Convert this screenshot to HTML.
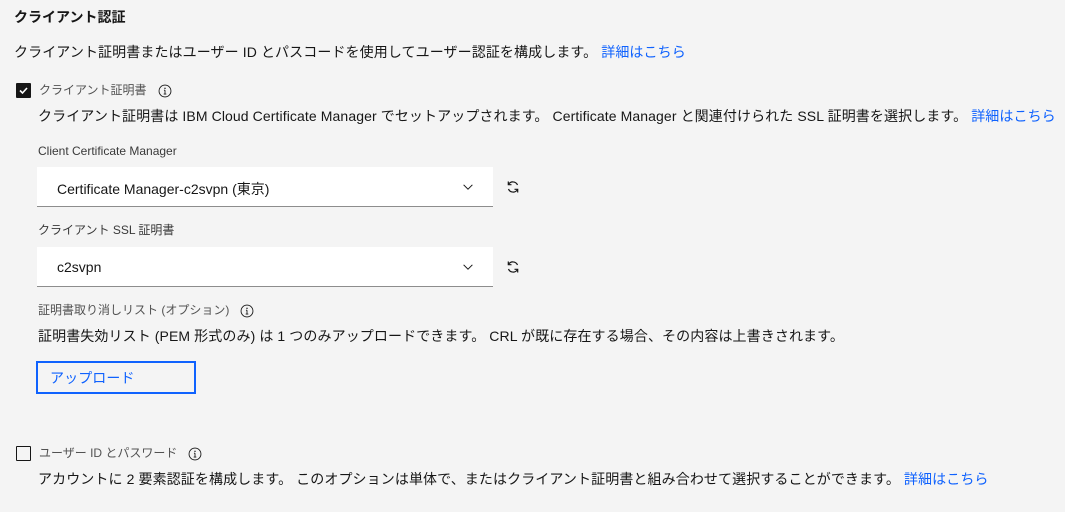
<!DOCTYPE html>
<html><head><meta charset="utf-8"><style>
body{margin:0;width:1065px;height:512px;background:#f4f4f4;font-family:"Liberation Sans","Noto Sans CJK JP",sans-serif;color:#161616;position:relative;overflow:hidden}
.a{position:absolute;white-space:nowrap;line-height:1}
.t14{font-size:14px;letter-spacing:0.1px}
.lab{font-size:12px;color:#525252}
a,.lk{color:#0f62fe;text-decoration:none}
.cb{position:absolute;width:13px;height:13px;border:1px solid #161616;border-radius:1px}
.sel{position:absolute;left:37px;width:456px;height:39px;background:#fff;border-bottom:1px solid #8d8d8d}
.sel span{position:absolute;left:20px;top:12px;font-size:14px}
.sel svg{position:absolute;right:18px;top:13px}
.info{display:inline-block;vertical-align:middle;margin-left:11px}
</style></head><body>
<div class="a" style="left:14px;top:10px;font-size:14px;font-weight:bold">クライアント認証</div>
<div class="a t14" style="left:14px;top:45px">クライアント証明書またはユーザー ID とパスコードを使用してユーザー認証を構成します。 <span class="lk">詳細はこちら</span></div>

<div class="cb" style="left:16px;top:83px;background:#161616"><svg width="13" height="13" viewBox="0 0 13 13"><path d="M3 6.5l2.5 2.5 4.5-5" stroke="#fff" stroke-width="1.6" fill="none"/></svg></div>
<div class="a lab" style="left:39px;top:84px">クライアント証明書<svg class="info" width="14" height="14" viewBox="0 0 16 16"><circle cx="8" cy="8" r="6.8" fill="none" stroke="#161616" stroke-width="1"/><path d="M8 7v4.5M6.5 11.5h3M6.8 7h1.2" stroke="#161616" stroke-width="1" fill="none"/><circle cx="8" cy="5" r=".8" fill="#161616"/></svg></div>
<div class="a t14" style="left:38px;top:109px">クライアント証明書は IBM Cloud Certificate Manager でセットアップされます。 Certificate Manager と関連付けられた SSL 証明書を選択します。 <span class="lk">詳細はこちら</span></div>

<div class="a lab" style="left:38px;top:145px;color:#393939">Client Certificate Manager</div>
<div class="sel" style="top:167px"><span>Certificate Manager-c2svpn (東京)</span><svg width="14" height="14" viewBox="0 0 16 16"><path d="M3 5.5l5 5 5-5" stroke="#161616" stroke-width="1.2" fill="none"/></svg></div>
<svg class="a" style="left:505px;top:179px" width="16" height="16" viewBox="0 0 16 16"><path d="M12.5 6A5 5 0 0 0 3.5 5.5M3.5 10a5 5 0 0 0 9 .5" stroke="#161616" stroke-width="1.2" fill="none"/><path d="M3.3 2.5v3.2h3.2M12.7 13.5v-3.2H9.5" stroke="#161616" stroke-width="1.2" fill="none"/></svg>

<div class="a lab" style="left:38px;top:224px;color:#393939">クライアント SSL 証明書</div>
<div class="sel" style="top:247px"><span>c2svpn</span><svg width="14" height="14" viewBox="0 0 16 16"><path d="M3 5.5l5 5 5-5" stroke="#161616" stroke-width="1.2" fill="none"/></svg></div>
<svg class="a" style="left:505px;top:259px" width="16" height="16" viewBox="0 0 16 16"><path d="M12.5 6A5 5 0 0 0 3.5 5.5M3.5 10a5 5 0 0 0 9 .5" stroke="#161616" stroke-width="1.2" fill="none"/><path d="M3.3 2.5v3.2h3.2M12.7 13.5v-3.2H9.5" stroke="#161616" stroke-width="1.2" fill="none"/></svg>

<div class="a lab" style="left:38px;top:304px">証明書取り消しリスト (オプション)<svg class="info" width="14" height="14" viewBox="0 0 16 16"><circle cx="8" cy="8" r="6.8" fill="none" stroke="#161616" stroke-width="1"/><path d="M8 7v4.5M6.5 11.5h3M6.8 7h1.2" stroke="#161616" stroke-width="1" fill="none"/><circle cx="8" cy="5" r=".8" fill="#161616"/></svg></div>
<div class="a t14" style="left:38px;top:329px">証明書失効リスト (PEM 形式のみ) は 1 つのみアップロードできます。 CRL が既に存在する場合、その内容は上書きされます。</div>
<div class="a" style="left:36px;top:361px;width:156px;height:29px;border:2px solid #0f62fe"></div>
<div class="a t14 lk" style="left:50px;top:371px">アップロード</div>

<div class="cb" style="left:16px;top:446px"></div>
<div class="a lab" style="left:39px;top:447px">ユーザー ID とパスワード<svg class="info" width="14" height="14" viewBox="0 0 16 16"><circle cx="8" cy="8" r="6.8" fill="none" stroke="#161616" stroke-width="1"/><path d="M8 7v4.5M6.5 11.5h3M6.8 7h1.2" stroke="#161616" stroke-width="1" fill="none"/><circle cx="8" cy="5" r=".8" fill="#161616"/></svg></div>
<div class="a t14" style="left:38px;top:472px">アカウントに 2 要素認証を構成します。 このオプションは単体で、またはクライアント証明書と組み合わせて選択することができます。 <span class="lk">詳細はこちら</span></div>
</body></html>
